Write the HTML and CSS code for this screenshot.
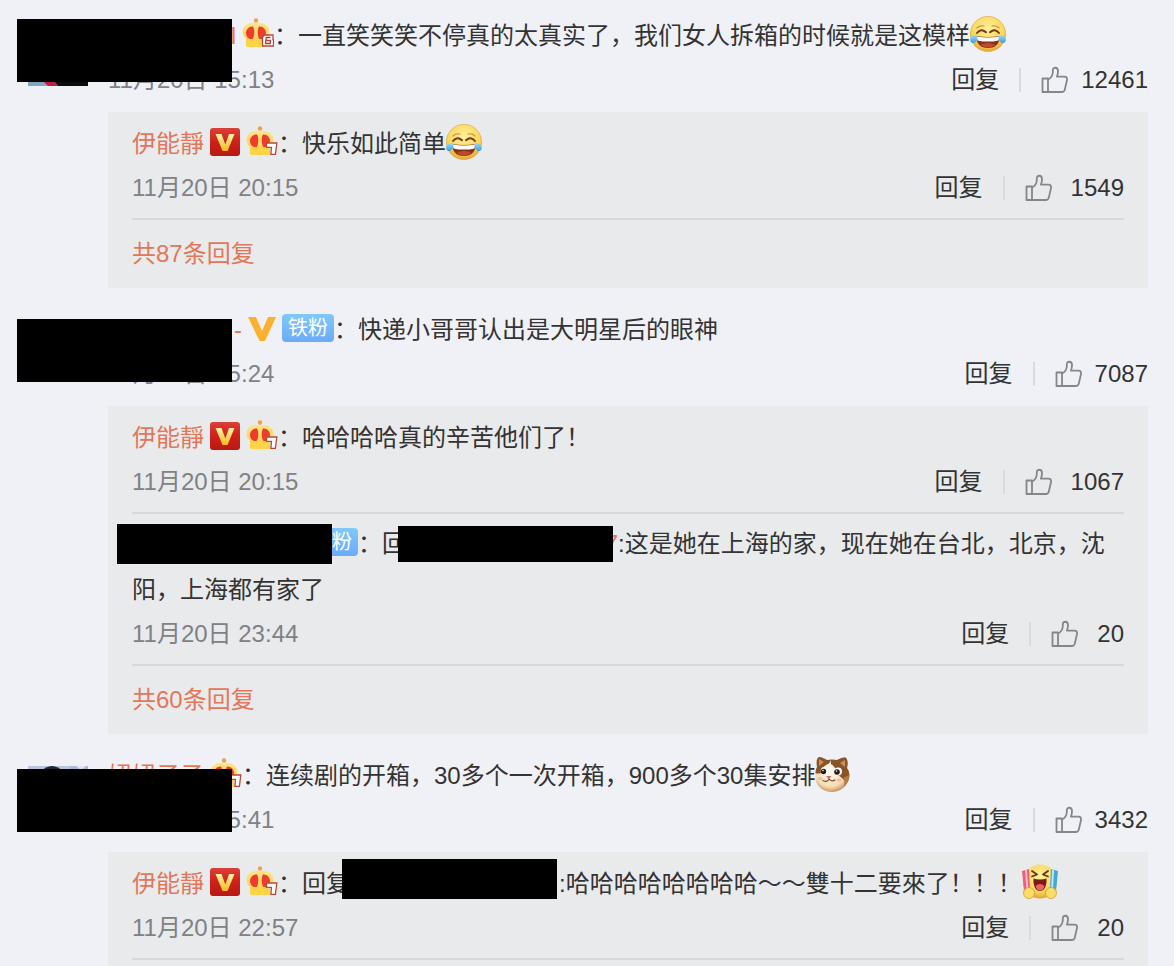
FILE: index.html
```html
<!DOCTYPE html>
<html lang="zh-CN">
<head>
<meta charset="utf-8">
<meta name="viewport" content="width=device-width, initial-scale=1">
<title>评论</title>
<link rel="stylesheet" href="styles.css">
</head>
<body>
<svg class="defs" aria-hidden="true">
  <defs>
    <linearGradient id="gRed" x1="0" y1="0" x2="0" y2="1"><stop offset="0" stop-color="#dc4038"/><stop offset=".5" stop-color="#cf2019"/><stop offset="1" stop-color="#b91813"/></linearGradient>
    <linearGradient id="gGold" x1="0" y1="0" x2="0" y2="1"><stop offset="0" stop-color="#fff3a8"/><stop offset="1" stop-color="#f5b921"/></linearGradient>
    <linearGradient id="gCrown" x1="0" y1="0" x2="0" y2="1"><stop offset="0" stop-color="#ffe58c"/><stop offset="1" stop-color="#fcc93a"/></linearGradient>
    <radialGradient id="gFace" cx=".5" cy=".35" r=".65"><stop offset="0" stop-color="#fff09a"/><stop offset=".7" stop-color="#fbd75c"/><stop offset="1" stop-color="#e5a334"/></radialGradient>
    <linearGradient id="gTear" x1="0" y1="0" x2="0" y2="1"><stop offset="0" stop-color="#9bdcf6"/><stop offset="1" stop-color="#3a9fdd"/></linearGradient>
    <radialGradient id="gCat" cx=".45" cy=".4" r=".65"><stop offset="0" stop-color="#fffdf6"/><stop offset=".7" stop-color="#f6dcb2"/><stop offset="1" stop-color="#b97d45"/></radialGradient>
    <clipPath id="catClip"><path d="M2 11C1 5 2 2 4 1c3 0 6 2 8 3q5-1 10 0c4-2 7-3 9-2 2 2 2 7 1 10 3 4 3 9 1 13-3 7-9 11-16 11S3 32 1 25c-1-5-1-10 1-14z"/></clipPath>
  </defs>
  <symbol id="thumb" viewBox="0 0 28 28">
    <g fill="none" stroke="#85868a" stroke-width="1.8" stroke-linejoin="round" stroke-linecap="round">
      <path d="M1.500 12.500H7V26H1.500z"/>
      <path d="M7 13.500c3-1.300 4.500-4 4.800-7V4.200C12 .8 17 .8 17 5c0 2-.4 4-1.100 5.700h7.600c2 0 2.900 1.400 2.500 3.300l-2.200 9.600c-.4 1.600-1.300 2.400-2.900 2.400H7"/>
    </g>
  </symbol>
  <symbol id="vred" viewBox="0 0 30 28">
    <rect width="30" height="28" rx="3" fill="url(#gRed)"/>
    <path d="M5.500 6h6l3.800 10.500L19 6h5.500l-7 17h-5z" fill="url(#gGold)"/>
  </symbol>
  <symbol id="vgold" viewBox="0 0 28 26">
    <path d="M0 1h8l6 14L20 1h8L17 25h-5.500z" fill="#fbb12f"/>
  </symbol>
  <symbol id="crown" viewBox="0 0 32 30">
    <circle cx="14" cy="2.500" r="2.200" fill="#f0a04b"/>
    <path d="M14 6c2-2 5-1.500 7-.5 4.500 1.500 7 5 6.300 9.500-.5 3-2 4.500-3.300 6V27q0 2-2 2H6q-2 0-2-2v-6C2.700 19.500 1.200 18 .7 15 0 10.500 2.500 7 7 5.500c2-1 5-1.500 7 .5z" fill="url(#gCrown)"/>
    <path d="M11 8.500c-3.500-.5-7 2.500-7 6.500 0 3 2 5.500 4 6h2.500c2-2 2.500-9.500.5-12.500zM17 8.500c3.500-.5 7 2.500 7 6.500 0 3-2 5.500-4 6h-2.500c-2-2-2.500-9.500-.5-12.500z" fill="#ee3c2c"/>
    <path d="M4 22q10-2 20 0v5q0 2-2 2H6q-2 0-2-2z" fill="#fdd348"/>
  </symbol>
  <symbol id="crown6" viewBox="0 0 32 30">
    <use href="#crown" width="32" height="30"/>
    <path d="M22.500 17H31v4.500h.5V28H20.500v-9z" fill="#fff" stroke="#b54a3b" stroke-width="1.300"/>
    <path d="M28.500 19.500h-4.200L23.500 25.500h4.700l.3-3h-4.200" fill="none" stroke="#a94435" stroke-width="1.300"/>
  </symbol>
  <symbol id="crown7" viewBox="0 0 32 30">
    <use href="#crown" width="32" height="30"/>
    <path d="M20.500 17h10.300l-1.400 11.300h-4.500l.6-7h-5z" fill="#fff" stroke="#b54a3b" stroke-width="1.300"/>
  </symbol>
  <symbol id="joy" viewBox="0 0 36 36">
    <circle cx="18" cy="18" r="17.600" fill="url(#gFace)" stroke="#d9a13c" stroke-width=".6"/>
    <path d="M6.500 20q11.500 2 23 0c.8 7.500-4 12-11.500 12S5.700 27.500 6.500 20z" fill="#8c3018"/>
    <path d="M7 20.400q11 2.200 22 0l-.4 4q-10.500 2.400-21.200 0z" fill="#fff"/>
    <path d="M10.500 29q7.500-4 15 0-7.500 5-15 0z" fill="#b94c2b"/>
    <path d="M7 17q4-5 9-.8M20 16.200q5-4.200 9 .8" fill="none" stroke="#70391a" stroke-width="2" stroke-linecap="round"/>
    <path d="M7 12q3-3 7-2M22 10q4-1 7 2" fill="none" stroke="#c68b35" stroke-width="1.200" stroke-linecap="round"/>
    <path d="M7.500 19C3 18.500-.5 21 .3 25c1 3 5.400 2.500 6.400-.5.600-2 .5-4 .8-5.500zM28.500 19c4.500-.5 8 2 7.200 6-1 3-5.400 2.500-6.400-.5-.6-2-.5-4-.8-5.500z" fill="url(#gTear)"/>
  </symbol>
  <symbol id="cat" viewBox="0 0 36 36">
    <g clip-path="url(#catClip)">
      <rect width="34" height="36" fill="url(#gCat)"/>
      <path d="M0 0h16q1 7-5 9-4 2-5 8-3 1-6 0zM16 0h20v27q-5 2-7-3-3-3-6-5-2-8-7-11z" fill="#8a5427"/>
      <path d="M4 3l5 3-5 4zM30 4l-5 3 5 4z" fill="#c99162"/>
      <path d="M28 22q3 5 0 10l8-3V18z" fill="#b77a40"/>
    </g>
    <ellipse cx="9.500" cy="15" rx="3.800" ry="4" fill="#fff"/><ellipse cx="23" cy="15.500" rx="4" ry="4" fill="#fff"/>
    <circle cx="8.500" cy="15.500" r="2.700" fill="#2b1a10"/><circle cx="22" cy="16" r="2.800" fill="#2b1a10"/>
    <circle cx="8" cy="14.500" r=".8" fill="#fff"/><circle cx="21.500" cy="15" r=".8" fill="#fff"/>
    <ellipse cx="5" cy="22.500" rx="2.500" ry="1.500" fill="#f6b9a0"/><ellipse cx="24" cy="24" rx="2.500" ry="1.500" fill="#f6b9a0"/>
    <path d="M11 20h5.500l-2.700 3z" fill="#d86570"/>
    <path d="M8 24.500q4 2.500 6-1.500 2 3 6 1" fill="none" stroke="#7c4a2c" stroke-width="1.200" stroke-linecap="round"/>
  </symbol>
  <symbol id="cheer" viewBox="0 0 36 36">
    <circle cx="18" cy="17.500" r="17" fill="url(#gFace)"/>
    <path d="M10 7l5 3.500-5 2M26 7l-5 3.500 5 2" fill="none" stroke="#5f3515" stroke-width="1.800" stroke-linecap="round" stroke-linejoin="round"/>
    <path d="M11.500 14.500q6.500 2 13 0c.5 7-2 12.500-6.500 12.500s-7-5.500-6.500-12.500z" fill="#7c1d15"/>
    <path d="M13.500 22q4.500-4 9 0-1.500 4.500-4.500 4.500T13.500 22z" fill="#ed6262"/>
    <path d="M0 7l7-2 1 20-6 2z" fill="#ef6078"/><path d="M3 6.100l1.800-.5 1.500 19-1.800.6z" fill="#fbc0ca"/>
    <path d="M36 7l-7-2-1 20 6 2z" fill="#45a9d8"/><path d="M32 5.800l-1.800-.5-1 19 1.800.6z" fill="#c0ebfa"/>
    <circle cx="7" cy="29" r="5.500" fill="#fbdd68" stroke="#d39a31" stroke-width=".8"/>
    <circle cx="29" cy="29" r="5.500" fill="#fbdd68" stroke="#d39a31" stroke-width=".8"/>
  </symbol>
  <symbol id="avatar1" viewBox="0 0 60 60">
    <rect width="60" height="60" fill="#7fa9bf"/><path d="M16 56q8-4 14 4H20z" fill="#c51c3c"/><path d="M26 0h34v60H30q-2-4-8-6z" fill="#0b0b10"/>
  </symbol>
  <symbol id="avatar3" viewBox="0 0 60 60">
    <rect width="60" height="60" fill="#b9c6e2"/><path d="M42 0h18v60H42z" fill="#a9bad6"/><path d="M48 0l5 4 5-4z" fill="#dfe7f4"/><path d="M12 6Q24-6 36 6v54H12z" fill="#24242e"/>
  </symbol>
</svg>

<main class="feed">
  <article class="comment">
    <svg class="avatar" aria-hidden="true"><use href="#avatar1"/></svg>
    <div class="body">
      <p class="text"><a class="name name-a" href="#">l</a><svg class="ico crown"><use href="#crown6"/></svg>：一直笑笑笑不停真的太真实了，我们女人拆箱的时候就是这模样<svg class="emoji" role="img" aria-label="笑cry"><use href="#joy"/></svg></p>
      <div class="meta"><time>11月20日 15:13</time><div class="actions"><button type="button">回复</button><button type="button" class="like"><svg class="thumb" aria-hidden="true"><use href="#thumb"/></svg>12461</button></div></div>
      <div class="replies">
        <section class="reply">
          <p class="text"><a class="name" href="#">伊能靜</a><svg class="ico vred"><use href="#vred"/></svg><svg class="ico crown"><use href="#crown7"/></svg>：快乐如此简单<svg class="emoji" role="img" aria-label="笑cry"><use href="#joy"/></svg></p>
          <div class="meta"><time>11月20日 20:15</time><div class="actions"><button type="button">回复</button><button type="button" class="like"><svg class="thumb" aria-hidden="true"><use href="#thumb"/></svg>1549</button></div></div>
        </section>
        <a class="total" href="#">共87条回复</a>
      </div>
    </div>
    <span class="mask mask-a"></span>
  </article>

  <article class="comment">
    <svg class="avatar" aria-hidden="true"><use href="#avatar1"/></svg>
    <div class="body">
      <p class="text"><a class="name name-b" href="#">-</a><svg class="ico vgold"><use href="#vgold"/></svg><span class="fan">铁粉</span>：快递小哥哥认出是大明星后的眼神</p>
      <div class="meta"><time>11月20日 15:24</time><div class="actions"><button type="button">回复</button><button type="button" class="like"><svg class="thumb" aria-hidden="true"><use href="#thumb"/></svg>7087</button></div></div>
      <div class="replies">
        <section class="reply">
          <p class="text"><a class="name" href="#">伊能靜</a><svg class="ico vred"><use href="#vred"/></svg><svg class="ico crown"><use href="#crown7"/></svg>：哈哈哈哈真的辛苦他们了！</p>
          <div class="meta"><time>11月20日 20:15</time><div class="actions"><button type="button">回复</button><button type="button" class="like"><svg class="thumb" aria-hidden="true"><use href="#thumb"/></svg>1067</button></div></div>
        </section>
        <section class="reply">
          <p class="text"><a class="name name-c" href="#"></a><span class="fan">铁粉</span>：回复<a class="name name-d" href="#">7</a>:这是她在上海的家，现在她在台北，北京，沈阳，上海都有家了</p>
          <div class="meta"><time>11月20日 23:44</time><div class="actions"><button type="button">回复</button><button type="button" class="like"><svg class="thumb" aria-hidden="true"><use href="#thumb"/></svg>20</button></div></div>
          <span class="mask mask-d"></span><span class="mask mask-e"></span>
        </section>
        <a class="total" href="#">共60条回复</a>
      </div>
    </div>
    <span class="mask mask-b"></span>
  </article>

  <article class="comment">
    <svg class="avatar" aria-hidden="true"><use href="#avatar3"/></svg>
    <div class="body">
      <p class="text"><a class="name" href="#">妞妞子子</a><svg class="ico crown"><use href="#crown7"/></svg>：连续剧的开箱，30多个一次开箱，900多个30集安排<svg class="emoji" role="img" aria-label="猫"><use href="#cat"/></svg></p>
      <div class="meta"><time>11月20日 15:41</time><div class="actions"><button type="button">回复</button><button type="button" class="like"><svg class="thumb" aria-hidden="true"><use href="#thumb"/></svg>3432</button></div></div>
      <div class="replies">
        <section class="reply">
          <p class="text"><a class="name" href="#">伊能靜</a><svg class="ico vred"><use href="#vred"/></svg><svg class="ico crown"><use href="#crown7"/></svg>：回复<a class="name name-e" href="#"></a>:哈哈哈哈哈哈哈哈～～雙十二要來了！！！<svg class="emoji" role="img" aria-label="欢呼"><use href="#cheer"/></svg></p>
          <div class="meta"><time>11月20日 22:57</time><div class="actions"><button type="button">回复</button><button type="button" class="like"><svg class="thumb" aria-hidden="true"><use href="#thumb"/></svg>20</button></div></div>
          <span class="mask mask-f"></span>
        </section>
      </div>
    </div>
    <span class="mask mask-c"></span>
  </article>
</main>
</body>
</html>
```
FILE: styles.css
```css
* { box-sizing: border-box; }

body {
  margin: 0;
  background: #f0f1f6;
  color: #333;
  font: 24px/46px "Liberation Sans", "Noto Sans CJK SC", sans-serif;
}

.defs { position: absolute; width: 0; height: 0; }

.feed {
  display: flex;
  flex-direction: column;
  gap: 18px;
  padding: 12px 26px 0 28px;
}

.comment {
  position: relative;
  display: flex;
  align-items: flex-start;
  gap: 20px;
}

.avatar { flex: none; width: 60px; height: 60px; margin-top: 14px; }
.body { flex: 1; min-width: 0; }

.text {
  margin: 0;
  padding-top: 1px;
  text-spacing-trim: space-all;
}

.name { color: #e3775a; text-decoration: none; }
.name-a, .name-b, .name-c, .name-d, .name-e {
  display: inline-block;
  height: 46px;
  text-align: right;
  vertical-align: top;
}
.name-a { width: 128px; }
.name-b { width: 134px; }
.name-c { width: 168px; }
.name-d { width: 188px; }
.name-e { width: 209px; }

.ico { margin-left: 6px; vertical-align: -4px; }
.vred { width: 30px; height: 28px; }
.vgold { width: 28px; height: 26px; vertical-align: -4px; }
.crown { width: 32px; height: 30px; }
.emoji { width: 36px; height: 36px; vertical-align: -8px; }

.fan {
  display: inline-flex;
  justify-content: center;
  width: 52px;
  height: 28px;
  margin-left: 6px;
  border-radius: 4px;
  background: linear-gradient(#80c8fb, #6cabf8);
  color: #fff;
  font-size: 20px;
  line-height: 28px;
  vertical-align: 3px;
}

.meta {
  display: flex;
  justify-content: space-between;
  align-items: center;
  height: 36px;
  margin-top: 3px;
  line-height: 36px;
}
.meta time { color: #808184; }

.actions { display: flex; align-items: center; }
.actions button {
  display: flex;
  align-items: center;
  padding: 0;
  border: 0;
  background: none;
  color: inherit;
  font: inherit;
  cursor: pointer;
}
.actions .like { gap: 12px; margin-left: 20px; }
.actions .like::before {
  content: "";
  width: 2px;
  height: 24px;
  margin-right: 8px;
  background: #d9dadd;
}
.reply .like { gap: 18px; }
.reply .like::before { margin-right: 2px; }
.thumb { width: 28px; height: 28px; }

.replies {
  margin-top: 14px;
  padding: 2px 24px 6px;
  background: #e9eaec;
}
.reply {
  position: relative;
  padding: 6px 0 12px;
  border-bottom: 2px solid #d7d8da;
}
.total {
  display: block;
  padding: 11px 0 5px;
  color: #e3775a;
  text-decoration: none;
}

.mask { position: absolute; width: 215px; height: 63px; background: #000; }
.mask-a { left: -11px; top: 7px; }
.mask-b { left: -11px; top: 13px; }
.mask-c { left: -11px; top: 17px; }
.mask-d { left: -15px; top: 10px; height: 40px; }
.mask-e { left: 266px; top: 12px; height: 36px; }
.mask-f { left: 210px; top: 5px; height: 40px; }
```
